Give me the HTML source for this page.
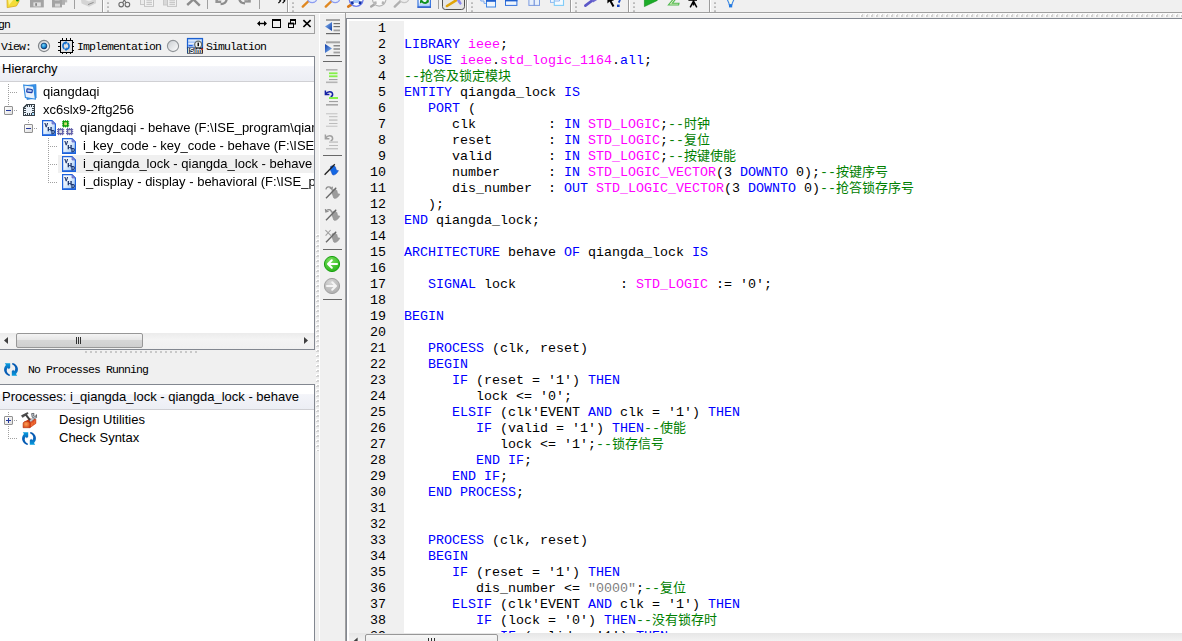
<!DOCTYPE html>
<html><head><meta charset="utf-8"><title>ISE</title>
<style>
html,body{margin:0;padding:0;}
body{width:1182px;height:641px;overflow:hidden;background:#f0f0f0;position:relative;font-family:"Liberation Sans","Noto Sans CJK SC",sans-serif;font-size:13px;color:#000;}
.abs,.a{position:absolute;}
svg{position:absolute;overflow:visible;}
svg.gl{will-change:transform;}
/* top toolbar */
#tbline{position:absolute;left:0;top:12px;width:1182px;height:1px;background:#a0a0a0;box-shadow:0 1px 0 #fafafa;}
.vsep{position:absolute;top:0;width:1px;height:9px;background:#a0a0a0;}
.vend{position:absolute;top:0;width:1px;height:12px;background:#9c9c9c;box-shadow:1px 0 0 #fff;}
.grip{position:absolute;top:2px;width:2px;height:10px;background:repeating-linear-gradient(to bottom,#d0d0d0 0,#b4b4b4 2px,transparent 2px,transparent 4px);}
/* left panel */
#ptitle{position:absolute;left:-1px;top:15px;width:314px;height:17px;border:1px solid #a0a0a0;box-sizing:content-box;}
.sim{font-family:"Liberation Mono","Noto Sans CJK SC",monospace;font-size:11.5px;letter-spacing:-0.9px;white-space:pre;}
#hbox{position:absolute;left:-1px;top:56px;width:314px;height:292px;border:1px solid #828790;background:#fff;box-sizing:content-box;overflow:hidden;}
#pbox{position:absolute;left:-1px;top:384px;width:314px;height:270px;border:1px solid #828790;background:#fff;box-sizing:content-box;overflow:hidden;}
.hdr{position:absolute;left:0;top:0;width:315px;height:24px;background:linear-gradient(#ffffff 0,#ffffff 36%,#f3f4f9 40%,#eceef4 100%);border-bottom:1px solid #d0d0d4;}
.hdr span{position:absolute;left:2px;top:4px;white-space:pre;}
.ti{position:absolute;white-space:pre;line-height:18px;height:18px;}
.dotv{position:absolute;width:1px;background:repeating-linear-gradient(to bottom,#a0a0a0 0,#a0a0a0 1px,transparent 1px,transparent 2px);}
.doth{position:absolute;height:1px;background:repeating-linear-gradient(to right,#a0a0a0 0,#a0a0a0 1px,transparent 1px,transparent 2px);}
.pm{position:absolute;width:7px;height:7px;border:1px solid #919191;background:linear-gradient(135deg,#fff,#e0e0e0);border-radius:1px;}
.pm:before{content:"";position:absolute;left:1px;top:3px;width:5px;height:1px;background:#24399b;}
.pm.plus:after{content:"";position:absolute;left:3px;top:1px;width:1px;height:5px;background:#24399b;}
/* editor */
#edtb{position:absolute;left:319px;top:13px;width:1px;height:628px;background:#fff;}
#edtb2{position:absolute;left:319px;top:13px;width:26px;height:1px;background:#fff;}
#vdots{position:absolute;left:316px;top:234px;width:3px;height:217px;background:repeating-linear-gradient(to bottom,#fff 0,#fff 1px,#cdcdcd 1px,#d4d4d4 3px,transparent 3px,transparent 5px);}
#vdots:after{content:"";position:absolute;left:0;top:0;width:1px;height:100%;background:repeating-linear-gradient(to bottom,#fff 0,#fff 2px,transparent 2px,transparent 5px);}
#hdots{position:absolute;left:860px;top:14px;width:322px;height:3px;background:repeating-linear-gradient(to right,#fff 0,#fff 1px,#cdcdcd 1px,#d4d4d4 3px,transparent 3px,transparent 5px);}
#hdots:after{content:"";position:absolute;left:0;top:0;height:1px;width:100%;background:repeating-linear-gradient(to right,#fff 0,#fff 2px,transparent 2px,transparent 5px);}
#vline{position:absolute;left:345px;top:13px;width:1px;height:628px;background:#a0a0a0;}
#edframe{position:absolute;left:346px;top:18px;width:836px;height:623px;background:#fff;border-left:1px solid #828790;border-top:1px solid #828790;box-sizing:border-box;}
#gutter{position:absolute;left:349px;top:21px;width:55px;height:612px;background:#f0f0f0;}
#code{position:absolute;left:349px;top:21px;width:833px;height:612px;overflow:hidden;font-family:"Liberation Mono","Noto Sans CJK SC",monospace;font-size:13.33px;line-height:16px;color:#000;}
#code .ln{height:16px;position:relative;}
#code .no{position:absolute;left:0;width:37px;text-align:right;top:0;}
#code .tx{position:absolute;left:55px;top:0;white-space:pre;}
.k{color:#0000ff}.t{color:#ff00ff}.c{color:#008000}.s{color:#808080}
.z{font-size:13px}
#hsb{position:absolute;left:349px;top:633px;width:833px;height:8px;background:linear-gradient(#e6e6e6,#f2f2f2);}
#hthumb{position:absolute;left:365px;top:634px;width:131px;height:12px;border:1px solid #979797;border-radius:2px;background:linear-gradient(#f6f6f6,#e8e8e8);}
</style></head><body>

<!-- ===== top toolbar (clipped) ===== -->
<div id="tbline"></div>
<div class="vsep" style="left:74px"></div><div class="vsep" style="left:207px"></div><div class="vsep" style="left:259px"></div><div class="vsep" style="left:438px"></div><div class="vend" style="left:102px"></div><div class="grip" style="left:107px"></div><div class="vend" style="left:287px"></div><div class="grip" style="left:292px"></div><div class="vend" style="left:466px"></div><div class="grip" style="left:471px"></div><div class="vend" style="left:570px"></div><div class="grip" style="left:575px"></div><div class="vend" style="left:628px"></div><div class="grip" style="left:633px"></div><div class="vend" style="left:709px"></div><div class="grip" style="left:714px"></div><svg style="left:0;top:0" width="760" height="12" viewBox="0 0 760 12"><g><path d="M7 -2 L19.2 -2 L19 1.4 L16.4 6 L7.2 7.6 Z" fill="#f4dc38" stroke="#d8a818" stroke-width="0.8"/><path d="M8 -1 L14 -1 L9 5 Z" fill="#fcf490"/><circle cx="17.4" cy="0.2" r="1.3" fill="#189818"/><rect x="30" y="-3" width="13.8" height="10.4" fill="#a4a4a4"/><rect x="33.4" y="2.4" width="7.4" height="4" fill="#e0e0e0"/><rect x="35.4" y="3.2" width="1.4" height="2.6" fill="#707070"/><rect x="52" y="-3" width="10" height="10.4" fill="#a4a4a4"/><rect x="55" y="3.6" width="5" height="3" fill="#d8d8d8"/><rect x="54.6" y="-3" width="5" height="3.6" fill="#d0d0d0"/><rect x="62" y="-3" width="3" height="7.8" fill="#b0b0b0"/><rect x="65" y="-3" width="2.2" height="5.4" fill="#bcbcbc"/><path d="M81 0 L81.6 3.4 L89 6.8 L96 3.2 L96 -1 Z" fill="#d4d4d4"/><path d="M83 -1 L89 1.6 L95 -1 Z" fill="#ececec"/><path d="M88 4.6 L93.6 2.4" stroke="#909090" stroke-width="1"/><circle cx="121.2" cy="4.6" r="2.3" fill="none" stroke="#6c6c6c" stroke-width="1.1"/><circle cx="127.4" cy="4.6" r="2.3" fill="none" stroke="#6c6c6c" stroke-width="1.1"/><path d="M122.6 2.8 L125.4 -2 M126 2.8 L123.2 -2" stroke="#6c6c6c" stroke-width="1.1"/><rect x="140.5" y="-3" width="5" height="7.5" fill="#ececec" stroke="#c8c8c8" stroke-width="1"/><rect x="144.5" y="-3" width="9" height="9.4" fill="#f4f4f4" stroke="#c4c4c4" stroke-width="1"/><path d="M146.4 0.8 H152 M146.4 2.6 H152 M146.4 4.4 H152" stroke="#c0c0c0" stroke-width="0.9"/><rect x="163.5" y="-3" width="5" height="8" fill="#d8d8d8" stroke="#c8c8c8" stroke-width="1"/><rect x="167.5" y="-3" width="9" height="9.4" fill="#f0f0f0" stroke="#c4c4c4" stroke-width="1"/><path d="M169.4 0.8 H175 M169.4 2.6 H175 M169.4 4.4 H175" stroke="#c0c0c0" stroke-width="0.9"/><path d="M187.2 5 L193.4 -0.6 L199.8 5.6" stroke="#8c8c8c" stroke-width="2.4" fill="none" stroke-linejoin="miter"/><rect x="215.4" y="-2" width="5.8" height="5" fill="#949494"/><rect x="218" y="-2" width="3.2" height="2.6" fill="#f0f0f0"/><path d="M220.6 4.2 C224.6 4 226.8 2 226.8 -2" stroke="#8c8c8c" stroke-width="2.2" fill="none"/><rect x="244.4" y="-2" width="6.4" height="4.6" fill="#949494"/><rect x="244.4" y="-2" width="3.6" height="2.2" fill="#f0f0f0"/><path d="M245 3.4 C241 3.2 239.2 1.4 239.2 -2" stroke="#8c8c8c" stroke-width="2.2" fill="none"/><path d="M277.6 -2 L280.6 0.8 L278.4 3.2 M281.8 -2 L284.8 0.8 L282.6 3.2" stroke="#000" stroke-width="1.2" fill="none"/><path d="M302.8 6.6 L308.6 1" stroke="#e08820" stroke-width="2.4" stroke-linecap="round"/><circle cx="312.2" cy="-2" r="4.7" fill="#e4ecfc" stroke="#8c9cf0" stroke-width="1.2"/><path d="M325.8 6.6 L331.6 1" stroke="#e08820" stroke-width="2.4" stroke-linecap="round"/><circle cx="335.2" cy="-2" r="4.7" fill="#e4ecfc" stroke="#8c9cf0" stroke-width="1.2"/><path d="M348.2 6.6 L351.4 4.6" stroke="#d87818" stroke-width="2.6" stroke-linecap="round"/><circle cx="356.2" cy="-0.6" r="6.9" fill="#fbfcff" stroke="#6c7cec" stroke-width="1.3"/><ellipse cx="356.2" cy="0.4" rx="3.2" ry="2.6" fill="#a4c4f8"/><path d="M350.4 1.6 L353.4 1.2 L353.8 4 L351.6 4.6 Z" fill="#1030a4"/><path d="M362 1.6 L359 1.2 L358.6 4 L360.8 4.6 Z" fill="#1030a4"/><path d="M353.4 -3 L355 -1.6 M359 -3 L357.4 -1.6" stroke="#2848c0" stroke-width="1.2"/><path d="M371.2 6.6 L374.4 4.6" stroke="#a8a8a8" stroke-width="2.4" stroke-linecap="round"/><circle cx="379.2" cy="-0.6" r="6.7" fill="#f8f8f8" stroke="#b4b4b4" stroke-width="1.2"/><path d="M373.6 1.8 L376.4 1.2 L376.8 3.8 L374.8 4.6 Z" fill="#b4b4b4"/><path d="M384.8 1.8 L382 1.2 L381.6 3.8 L383.6 4.6 Z" fill="#b4b4b4"/><path d="M375.4 -3 Q379.2 1.6 383 -3" stroke="#c0c0c0" stroke-width="1.1" fill="none"/><path d="M394.8 6.6 L400.6 1" stroke="#b0b0b0" stroke-width="2.4" stroke-linecap="round"/><circle cx="404.2" cy="-2" r="4.7" fill="#ececec" stroke="#c4c4c4" stroke-width="1.2"/><defs><linearGradient id="rd" x1="0" y1="0" x2="0" y2="1"><stop offset="0" stop-color="#ffffff"/><stop offset="0.5" stop-color="#f0f6fe"/><stop offset="1" stop-color="#98c0f8"/></linearGradient></defs><rect x="418" y="-4" width="12.4" height="11" fill="url(#rd)" stroke="#3c78e0" stroke-width="1.2"/><rect x="417.4" y="6.6" width="13.6" height="1.2" fill="#2858c8"/><path d="M421 -2 C420.6 2.6 425.4 4.4 428 1.4" stroke="#109020" stroke-width="2" fill="none"/><path d="M420 3.6 L420 0.4 L423.2 1.6 Z M428.8 -1 L428.8 2.6 L425.6 1.2 Z" fill="#109020"/><rect x="442.5" y="-5" width="22" height="14.5" rx="2.8" fill="#e6e6e6" stroke="#505050" stroke-width="1"/><path d="M447 6 L456.4 0.2" stroke="#e0a408" stroke-width="2.6" stroke-linecap="round"/><path d="M456.4 -1.4 L458.8 -2 L461.8 3.6 L460.2 5 L457.8 2 Z" fill="#8c88f0"/><path d="M480.8 -3 V1 H484 V3.4 H486" stroke="#78a8f0" stroke-width="1" fill="none"/><rect x="486.5" y="-3" width="9" height="10" fill="#eef5fd" stroke="#3c84e4" stroke-width="1"/><rect x="486" y="-1" width="10" height="2.8" fill="#2060d0"/><rect x="505.5" y="-4" width="11.4" height="9.4" fill="#eef5fd" stroke="#3070dc" stroke-width="1"/><rect x="505" y="-2" width="12.4" height="3.4" fill="#2060d0"/><rect x="528.9" y="-4" width="10.6" height="9.4" fill="#e8f0fa" stroke="#7c9ce0" stroke-width="1"/><path d="M534.2 -4 V5.4" stroke="#6c8cd8" stroke-width="1.1"/><rect x="550.5" y="-6" width="9" height="8.4" fill="#f0f6fe" stroke="#90b8f0" stroke-width="1"/><rect x="554.3" y="-3" width="9.2" height="8.4" fill="#f4faff" stroke="#80ccf8" stroke-width="1.1"/><path d="M554.3 1 H559.5 V-3" stroke="#90b8f0" stroke-width="1" fill="none"/><path d="M585.4 5.6 L592 0.6" stroke="#5c58c8" stroke-width="2.6" stroke-linecap="round"/><path d="M590.6 -1 L597.6 -3 L598 -0.6 L593 2.6 Z" fill="#6c68d0"/><path d="M607.4 -5 L607.4 3.6 L609.6 1.6 L612.6 7 L614.4 6 L611.6 1 L614 0.6 Z" fill="#000"/><path d="M617.4 -3 C620.4 -3 620.6 0 618.6 2.6" stroke="#1040c0" stroke-width="1.8" fill="none"/><rect x="617" y="4.6" width="2.6" height="2.4" fill="#1040c0"/><path d="M644.4 -6 L657.4 0.4 L644.4 6.6 Z" fill="#1cac28" stroke="#0c8c18" stroke-width="0.6"/><path d="M675 -3 L668.4 5 H678.6 L679 3.2 H672.4 L677.4 -3 Z" fill="#e4f4c8" stroke="#50b850" stroke-width="1.1"/><path d="M693.5 -3 V5.4 M693.5 1 L690.2 7.4 M693.5 1 L696.8 7.4" stroke="#000" stroke-width="1.5" fill="none"/><rect x="688.4" y="-3" width="8.6" height="3.8" fill="#000"/><path d="M727 -3 C726.8 0.6 729 1.8 729.2 4.6 H732 C732.2 1.8 734.4 0.6 734.2 -3 Z" fill="#f4f8e8" stroke="#3c84e4" stroke-width="1.1"/><rect x="729" y="4.8" width="3.2" height="2.6" fill="#2078e0"/></g></svg>

<!-- ===== left panel ===== -->
<div id="ptitle"></div>
<span class="a sim" style="left:-8px;top:18px;">ign</span>
<svg style="left:0;top:0" width="320" height="40" viewBox="0 0 320 40"><path d="M258 23.5 H266" stroke="#000" stroke-width="1.4"/><path d="M257 23.5 L260 20.8 V26.2 Z M267 23.5 L264 20.8 V26.2 Z" fill="#000"/><rect x="272.5" y="20" width="8" height="7.5" fill="none" stroke="#000" stroke-width="1"/><rect x="272" y="19" width="9" height="2" fill="#000"/><rect x="290.5" y="20" width="5" height="4" fill="none" stroke="#000" stroke-width="1"/><rect x="290" y="19" width="6" height="2" fill="#000"/><rect x="288.5" y="23.5" width="5" height="4" fill="#f0f0f0" stroke="#000" stroke-width="1"/><rect x="288" y="22.6" width="6" height="1.8" fill="#000"/><path d="M303.4 20.2 L310.6 27 M310.6 20.2 L303.4 27" stroke="#000" stroke-width="1.7"/></svg>
<span class="a sim" style="left:1px;top:40px;">View:</span>
<span class="a sim" style="left:77px;top:40px;">Implementation</span>
<span class="a sim" style="left:206px;top:40px;">Simulation</span>
<svg style="left:0;top:0" width="320" height="60" viewBox="0 0 320 60"><defs><radialGradient id="rb" cx="0.4" cy="0.35" r="0.7"><stop offset="0" stop-color="#7cd4f8"/><stop offset="0.6" stop-color="#1888d0"/><stop offset="1" stop-color="#0c3068"/></radialGradient><linearGradient id="rr" x1="0" y1="0" x2="1" y2="1"><stop offset="0" stop-color="#c8ccd0"/><stop offset="1" stop-color="#ffffff"/></linearGradient></defs><circle cx="44" cy="46" r="5.6" fill="url(#rr)" stroke="#808488" stroke-width="1.1"/><circle cx="44" cy="46" r="2.9" fill="url(#rb)" stroke="#0c3068" stroke-width="0.7"/><circle cx="173" cy="46" r="5.6" fill="url(#rr)" stroke="#909498" stroke-width="1.1"/><rect x="62" y="38" width="1" height="16" fill="#000"/><rect x="58" y="42" width="16" height="1" fill="#000"/><rect x="66" y="38" width="1" height="16" fill="#000"/><rect x="58" y="46" width="16" height="1" fill="#000"/><rect x="70" y="38" width="1" height="16" fill="#000"/><rect x="58" y="50" width="16" height="1" fill="#000"/><rect x="60.5" y="40.5" width="12" height="12" fill="#e0e0e0" stroke="#000" stroke-width="1"/><g fill="#1470cc"><path d="M65.6 41.8 C62.8 42.2 61.9 44.4 62.2 46.4 C62.4 47.8 63.1 48.8 64.1 49.4 L64.9 48.1 C64.1 47.5 63.8 46.9 63.8 46 C63.8 44.7 64.3 43.9 65.3 43.5 L65.3 44.8 L67.5 42.6 L65.6 40.7 Z"/><path d="M66.4 50.2 C69.2 49.8 70.1 47.6 69.8 45.6 C69.6 44.2 68.9 43.2 67.9 42.6 L67.1 43.9 C67.9 44.5 68.2 45.1 68.2 46 C68.2 47.3 67.7 48.1 66.7 48.5 L66.7 47.2 L64.5 49.4 L66.4 51.3 Z"/></g><rect x="187.5" y="38.5" width="15" height="10" fill="#a8c8f8" stroke="#1c60d0" stroke-width="1.2"/><rect x="188.4" y="40" width="13" height="1.4" fill="#d8e8fc"/><rect x="188.4" y="43" width="6" height="1.2" fill="#e8f0fc"/><rect x="188.6" y="45" width="4" height="1.2" fill="#2060e0"/><circle cx="198.2" cy="44.6" r="3.5" fill="#f0f4f4" stroke="#68706c" stroke-width="1.3"/><rect x="197.5" y="42.6" width="1.5" height="3.6" fill="#101010"/><rect x="187" y="47.6" width="16" height="6" fill="#141c2c"/><path d="M196 47.6 L198.2 49.6 L200.4 47.6 Z" fill="#68706c"/><text x="187.6" y="53" font-family="Liberation Sans,sans-serif" font-weight="bold" font-size="6.3" fill="#fff" textLength="14.6" lengthAdjust="spacingAndGlyphs">ISim</text><rect x="201.4" y="48.4" width="1.4" height="1.6" fill="#e83828"/></svg>

<div id="hbox">
  <div class="hdr"><span>Hierarchy</span></div>
  <div class="a" style="left:58px;top:98px;width:257px;height:18px;background:#f0f0f0"></div>
<div class="dotv" style="left:8px;top:27px;height:22px"></div>
<div class="doth" style="left:10px;top:35px;width:8px"></div>
<div class="doth" style="left:14px;top:53px;width:4px"></div>
<div class="dotv" style="left:28px;top:63px;height:4px"></div>
<div class="doth" style="left:34px;top:71px;width:4px"></div>
<div class="dotv" style="left:48px;top:81px;height:45px"></div>
<div class="doth" style="left:50px;top:89px;width:8px"></div>
<div class="doth" style="left:50px;top:107px;width:8px"></div>
<div class="doth" style="left:50px;top:125px;width:8px"></div>
<div class="pm" style="left:4px;top:49px"></div>
<div class="pm" style="left:24px;top:67px"></div>
<svg style="left:23px;top:27px" width="14" height="16" viewBox="0 0 14 16" ><path d="M2 1.6 L13 0.4 L13.2 14 L4 15.6 Z" fill="#3c94e8" stroke="#1c78d8" stroke-width="0.6"/><path d="M0.7 1 L10.6 2.2 L12.4 15.2 L2.4 13.6 Z" fill="#e8f2fc" stroke="#2a86e0" stroke-width="1.1"/><rect x="3.8" y="5.2" width="5.4" height="3.2" rx="0.6" fill="#b8d0f4" stroke="#1c3ca8" stroke-width="1.2" transform="rotate(8 6.5 7)"/></svg>
<svg style="left:23px;top:47px" width="12" height="12" viewBox="0 0 12 12" ><rect x="0" y="0" width="12" height="12" fill="#364048"/><rect x="3" y="1" width="1" height="2" fill="#eaf2fa"/><rect x="1" y="3" width="2" height="1" fill="#eaf2fa"/><rect x="5" y="1" width="1" height="2" fill="#eaf2fa"/><rect x="1" y="5" width="2" height="1" fill="#eaf2fa"/><rect x="7" y="1" width="1" height="2" fill="#eaf2fa"/><rect x="1" y="7" width="2" height="1" fill="#eaf2fa"/><rect x="9" y="1" width="1" height="2" fill="#eaf2fa"/><rect x="1" y="9" width="2" height="1" fill="#eaf2fa"/><rect x="1" y="9" width="1" height="2" fill="#eaf2fa"/><rect x="9" y="1" width="2" height="1" fill="#eaf2fa"/><rect x="3" y="9" width="1" height="2" fill="#eaf2fa"/><rect x="9" y="3" width="2" height="1" fill="#eaf2fa"/><rect x="5" y="9" width="1" height="2" fill="#eaf2fa"/><rect x="9" y="5" width="2" height="1" fill="#eaf2fa"/><rect x="7" y="9" width="1" height="2" fill="#eaf2fa"/><rect x="9" y="7" width="2" height="1" fill="#eaf2fa"/><rect x="9" y="9" width="1" height="2" fill="#eaf2fa"/><rect x="9" y="9" width="2" height="1" fill="#eaf2fa"/><rect x="3" y="3" width="6" height="6" fill="#eaf2fa"/><path d="M0 0 L4 0 L0 4 Z" fill="#fff"/><path d="M0.2 4.3 L4.3 0.2" stroke="#364048" stroke-width="1.3"/><rect x="9" y="9" width="2" height="2" fill="#a8dcfc"/></svg>
<svg style="left:42px;top:63px" width="14" height="16" viewBox="0 0 14 16" class="gl"><defs><linearGradient id="vga" x1="0" y1="0" x2="1" y2="1"><stop offset="0" stop-color="#ffffff"/><stop offset="0.45" stop-color="#e4f0fc"/><stop offset="1" stop-color="#8cbcf4"/></linearGradient></defs><path d="M0.6 0.6 H10 L13.4 4 V15.4 H0.6 Z" fill="url(#vga)" stroke="#1c62dc" stroke-width="1.2"/><path d="M1.2 14.6 H13" stroke="#1c62dc" stroke-width="0.8" fill="none"/><path d="M10 0.7 V4 H13.3 Z" fill="#8890dc" stroke="#5a66c8" stroke-width="0.7"/><g font-family="Liberation Sans,sans-serif" font-weight="bold" fill="#08205c" stroke="#08205c" stroke-width="0.25"><text x="2.4" y="6.8" font-size="5.2">V</text><text x="5.4" y="11.4" font-size="6.2">H</text><text x="9.3" y="14" font-size="5">D</text></g></svg>
<svg style="left:57px;top:63px" width="17" height="16" viewBox="0 0 17 16" ><rect x="6.1" y="0.2" width="1" height="7.2" fill="#0c9c0c"/><rect x="5" y="1.3" width="7.2" height="1" fill="#0c9c0c"/><rect x="8.1" y="0.2" width="1" height="7.2" fill="#0c9c0c"/><rect x="5" y="3.3" width="7.2" height="1" fill="#0c9c0c"/><rect x="10.1" y="0.2" width="1" height="7.2" fill="#0c9c0c"/><rect x="5" y="5.3" width="7.2" height="1" fill="#0c9c0c"/><rect x="5.9" y="1.1" width="5.4" height="5.4" fill="#0c9c0c"/><rect x="7.2" y="2.4" width="2.8" height="2.8" fill="#d4e070"/><rect x="1.1" y="8" width="1" height="7.2" fill="#6462a8"/><rect x="0" y="9.1" width="7.2" height="1" fill="#6462a8"/><rect x="3.1" y="8" width="1" height="7.2" fill="#6462a8"/><rect x="0" y="11.1" width="7.2" height="1" fill="#6462a8"/><rect x="5.1" y="8" width="1" height="7.2" fill="#6462a8"/><rect x="0" y="13.1" width="7.2" height="1" fill="#6462a8"/><rect x="0.9" y="8.9" width="5.4" height="5.4" fill="#6462a8"/><rect x="2.2" y="10.2" width="2.8" height="2.8" fill="#dcdce0"/><rect x="10.1" y="8" width="1" height="7.2" fill="#6462a8"/><rect x="9" y="9.1" width="7.2" height="1" fill="#6462a8"/><rect x="12.1" y="8" width="1" height="7.2" fill="#6462a8"/><rect x="9" y="11.1" width="7.2" height="1" fill="#6462a8"/><rect x="14.1" y="8" width="1" height="7.2" fill="#6462a8"/><rect x="9" y="13.1" width="7.2" height="1" fill="#6462a8"/><rect x="9.9" y="8.9" width="5.4" height="5.4" fill="#6462a8"/><rect x="11.2" y="10.2" width="2.8" height="2.8" fill="#dcdce0"/></svg>
<svg style="left:62px;top:81px" width="14" height="16" viewBox="0 0 14 16" class="gl"><defs><linearGradient id="vgb" x1="0" y1="0" x2="1" y2="1"><stop offset="0" stop-color="#ffffff"/><stop offset="0.45" stop-color="#e4f0fc"/><stop offset="1" stop-color="#8cbcf4"/></linearGradient></defs><path d="M0.6 0.6 H10 L13.4 4 V15.4 H0.6 Z" fill="url(#vgb)" stroke="#1c62dc" stroke-width="1.2"/><path d="M1.2 14.6 H13" stroke="#1c62dc" stroke-width="0.8" fill="none"/><path d="M10 0.7 V4 H13.3 Z" fill="#8890dc" stroke="#5a66c8" stroke-width="0.7"/><g font-family="Liberation Sans,sans-serif" font-weight="bold" fill="#08205c" stroke="#08205c" stroke-width="0.25"><text x="2.4" y="6.8" font-size="5.2">V</text><text x="5.4" y="11.4" font-size="6.2">H</text><text x="9.3" y="14" font-size="5">D</text></g></svg>
<svg style="left:62px;top:99px" width="14" height="16" viewBox="0 0 14 16" class="gl"><defs><linearGradient id="vgc" x1="0" y1="0" x2="1" y2="1"><stop offset="0" stop-color="#ffffff"/><stop offset="0.45" stop-color="#e4f0fc"/><stop offset="1" stop-color="#8cbcf4"/></linearGradient></defs><path d="M0.6 0.6 H10 L13.4 4 V15.4 H0.6 Z" fill="url(#vgc)" stroke="#1c62dc" stroke-width="1.2"/><path d="M1.2 14.6 H13" stroke="#1c62dc" stroke-width="0.8" fill="none"/><path d="M10 0.7 V4 H13.3 Z" fill="#8890dc" stroke="#5a66c8" stroke-width="0.7"/><g font-family="Liberation Sans,sans-serif" font-weight="bold" fill="#08205c" stroke="#08205c" stroke-width="0.25"><text x="2.4" y="6.8" font-size="5.2">V</text><text x="5.4" y="11.4" font-size="6.2">H</text><text x="9.3" y="14" font-size="5">D</text></g></svg>
<svg style="left:62px;top:117px" width="14" height="16" viewBox="0 0 14 16" class="gl"><defs><linearGradient id="vgd" x1="0" y1="0" x2="1" y2="1"><stop offset="0" stop-color="#ffffff"/><stop offset="0.45" stop-color="#e4f0fc"/><stop offset="1" stop-color="#8cbcf4"/></linearGradient></defs><path d="M0.6 0.6 H10 L13.4 4 V15.4 H0.6 Z" fill="url(#vgd)" stroke="#1c62dc" stroke-width="1.2"/><path d="M1.2 14.6 H13" stroke="#1c62dc" stroke-width="0.8" fill="none"/><path d="M10 0.7 V4 H13.3 Z" fill="#8890dc" stroke="#5a66c8" stroke-width="0.7"/><g font-family="Liberation Sans,sans-serif" font-weight="bold" fill="#08205c" stroke="#08205c" stroke-width="0.25"><text x="2.4" y="6.8" font-size="5.2">V</text><text x="5.4" y="11.4" font-size="6.2">H</text><text x="9.3" y="14" font-size="5">D</text></g></svg>
<span class="ti" style="left:43px;top:26px">qiangdaqi</span>
<span class="ti" style="left:43px;top:44px">xc6slx9-2ftg256</span>
<span class="ti" style="left:80px;top:62px">qiangdaqi - behave (F:\ISE_program\qiangdaqi\qiangdaqi.vhd)</span>
<span class="ti" style="left:83px;top:80px">i_key_code - key_code - behave (F:\ISE_program\qiangdaqi\key_code.vhd)</span>
<span class="ti" style="left:83px;top:98px">i_qiangda_lock - qiangda_lock - behave (F:\ISE_program\qiangdaqi\qiangda_lock.vhd)</span>
<span class="ti" style="left:83px;top:116px">i_display - display - behavioral (F:\ISE_program\qiangdaqi\display.vhd)</span>
<div class="a" style="left:0;top:276px;width:315px;height:16px;background:linear-gradient(#ebebeb,#f4f4f4 40%,#f0f0f0)"></div>
<div class="a" style="left:16px;top:276px;width:125px;height:13px;border:1px solid #979797;border-radius:2px;background:linear-gradient(#f4f4f4,#e6e6e6 45%,#d6d6d6 50%,#cfcfcf)"></div>
<svg style="left:0;top:276px" width="315" height="16"><path d="M8 4 L4 7.5 L8 11 Z" fill="#404040"/><path d="M304 4 L308 7.5 L304 11 Z" fill="#404040"/><path d="M76.5 4 V11 M78.5 4 V11 M80.5 4 V11" stroke="#303030" stroke-width="1"/></svg>
</div>

<div class="a" style="left:85px;top:351px;width:112px;height:2px;background:repeating-linear-gradient(to right,#c8c8c8 0,#c8c8c8 2px,transparent 2px,transparent 5px)"></div>
<svg style="left:4px;top:363px" width="14" height="13" viewBox="0 0 14 13" ><defs><linearGradient id="rfm" x1="0" y1="0" x2="0" y2="1"><stop offset="0" stop-color="#08a0e0"/><stop offset="0.5" stop-color="#0860b8"/><stop offset="1" stop-color="#0458b0"/></linearGradient></defs><path d="M0.8 0.2 L6.2 0.2 L6.2 4.8 L4.8 6.2 L3.8 4.8 C2.4 6.4 2.4 8.2 3.6 10 C4.2 10.8 5.2 11.4 6 11.8 L5.6 12.9 C3 12.6 0.5 10.2 0.1 7.2 C-0.1 5 0.7 3.4 2 2 Z" fill="url(#rfm)"/><path d="M0.8 0.2 L6.2 0.2 L6.2 4.8 L4.8 6.2 L3.8 4.8 C2.4 6.4 2.4 8.2 3.6 10 C4.2 10.8 5.2 11.4 6 11.8 L5.6 12.9 C3 12.6 0.5 10.2 0.1 7.2 C-0.1 5 0.7 3.4 2 2 Z" fill="url(#rfm)" transform="rotate(180 7 6.5)"/></svg>
<span class="a sim" style="left:28px;top:363px;">No Processes Running</span>

<div id="pbox">
  <div class="hdr"><span>Processes: i_qiangda_lock - qiangda_lock - behave</span></div>
  <div class="dotv" style="left:8px;top:27px;height:28px"></div>
<div class="doth" style="left:14px;top:35px;width:4px"></div>
<div class="doth" style="left:8px;top:53px;width:10px"></div>
<div class="pm plus" style="left:4px;top:31px"></div>
<svg style="left:21px;top:26px" width="17" height="17" viewBox="0 0 17 17" ><defs><radialGradient id="tbx" cx="0.45" cy="0.45" r="0.7"><stop offset="0" stop-color="#fca058"/><stop offset="1" stop-color="#d43c0c"/></radialGradient></defs><path d="M8.9 12.2 L14.9 8.2 L14.9 12.4 L8.9 16.7 Z" fill="#e85420" stroke="#b83010" stroke-width="0.5"/><path d="M10 13.4 L14 10.6 M10 15 L14 12" stroke="#f8a060" stroke-width="0.7" stroke-dasharray="0.9 0.9"/><path d="M2.6 11.4 L8.6 7.6 L14.9 8.2 L8.9 12.2 Z" fill="#c83410"/><path d="M2.1 16.7 V12.6 C2.1 9.6 8.9 9.4 8.9 12.6 V16.7 Z" fill="url(#tbx)" stroke="#b02808" stroke-width="0.6"/><path d="M4.4 3.2 L9.4 9.6" stroke="#404040" stroke-width="2"/><path d="M0.4 4.6 L6.4 1.6 L7.2 2 L6.6 3 L1.6 6.4 Z" fill="#505050" stroke="#303030" stroke-width="0.5"/><path d="M9.2 10.2 L13.6 6.2" stroke="#b8c4cc" stroke-width="2"/><path d="M10.6 2.6 L13 2.4 L12.6 5 L14.6 5.4 L15.4 3.6 L15.6 6.6 L13.8 7.4 L11.2 6.2 Z" fill="#c8d0d8" stroke="#404448" stroke-width="0.7"/></svg>
<svg style="left:22px;top:47px" width="14" height="13" viewBox="0 0 14 13" ><defs><linearGradient id="rfp" x1="0" y1="0" x2="0" y2="1"><stop offset="0" stop-color="#08a0e0"/><stop offset="0.5" stop-color="#0860b8"/><stop offset="1" stop-color="#0458b0"/></linearGradient></defs><path d="M0.8 0.2 L6.2 0.2 L6.2 4.8 L4.8 6.2 L3.8 4.8 C2.4 6.4 2.4 8.2 3.6 10 C4.2 10.8 5.2 11.4 6 11.8 L5.6 12.9 C3 12.6 0.5 10.2 0.1 7.2 C-0.1 5 0.7 3.4 2 2 Z" fill="url(#rfp)"/><path d="M0.8 0.2 L6.2 0.2 L6.2 4.8 L4.8 6.2 L3.8 4.8 C2.4 6.4 2.4 8.2 3.6 10 C4.2 10.8 5.2 11.4 6 11.8 L5.6 12.9 C3 12.6 0.5 10.2 0.1 7.2 C-0.1 5 0.7 3.4 2 2 Z" fill="url(#rfp)" transform="rotate(180 7 6.5)"/></svg>
<span class="ti" style="left:59px;top:26px">Design Utilities</span>
<span class="ti" style="left:59px;top:44px">Check Syntax</span>
</div>

<!-- ===== editor ===== -->
<div id="edtb"></div><div id="edtb2"></div><div id="vdots"></div><div id="hdots"></div>
<div id="vline"></div>
<svg style="left:0;top:0" width="346" height="310" viewBox="0 0 346 310"><defs><linearGradient id="tb1" x1="0" y1="0" x2="1" y2="1"><stop offset="0" stop-color="#8cbcf4"/><stop offset="1" stop-color="#0c3ca8"/></linearGradient><linearGradient id="tb2" x1="1" y1="1" x2="0" y2="0"><stop offset="0" stop-color="#8cbcf4"/><stop offset="1" stop-color="#0c3ca8"/></linearGradient><radialGradient id="gg" cx="0.4" cy="0.3" r="0.8"><stop offset="0" stop-color="#7be060"/><stop offset="1" stop-color="#1fb010"/></radialGradient><radialGradient id="gy" cx="0.4" cy="0.3" r="0.8"><stop offset="0" stop-color="#d8d8d8"/><stop offset="1" stop-color="#a8a8a8"/></radialGradient></defs><rect x="326" y="19" width="14" height="2" fill="#a4a4a4"/><rect x="333.5" y="23" width="6.5" height="1.2" fill="#707070"/><rect x="333.5" y="26" width="6.5" height="1.2" fill="#707070"/><rect x="333.5" y="29.5" width="6.5" height="1.8" fill="#a0a0a0"/><rect x="326" y="33" width="14" height="1.2" fill="#686868"/><path d="M325 26.5 L332 22 L332 31 Z" fill="url(#tb1)"/><rect x="326" y="41.3" width="14" height="2" fill="#a4a4a4"/><rect x="333.5" y="45.2" width="6.5" height="1.2" fill="#707070"/><rect x="333.5" y="48.4" width="6.5" height="1.2" fill="#707070"/><rect x="333.5" y="51.6" width="6.5" height="1.8" fill="#a0a0a0"/><rect x="326" y="55" width="14" height="1.2" fill="#686868"/><path d="M332 48.5 L325 44 L325 53 Z" fill="url(#tb2)"/><rect x="323" y="61" width="19" height="1" fill="#686868"/><rect x="326" y="69" width="11.5" height="1.6" fill="#b4b4b4"/><rect x="329" y="72.4" width="8.5" height="1.8" fill="#84f048"/><rect x="329" y="75.4" width="8.5" height="1.8" fill="#84f048"/><rect x="329" y="79" width="8.5" height="1.1" fill="#a0a0a0"/><rect x="326" y="81.5" width="11.5" height="1.6" fill="#b4b4b4"/><path d="M325.4 90.4 l0 4.2 l4 0 M325.8 93.8 c1.8 -3 6.4 -2.8 6.8 0.2 c0.2 1.6 -0.8 2.4 -2 2.8" stroke="#1420a4" stroke-width="1.5" fill="none"/><rect x="329" y="97" width="9" height="2" fill="#84f048"/><rect x="329" y="101" width="9" height="1.1" fill="#a0a0a0"/><rect x="326" y="104" width="12" height="1.6" fill="#a8a8a8"/><rect x="326" y="113" width="11.5" height="1.4" fill="#cfcfcf"/><rect x="329" y="116.2" width="8.5" height="1" fill="#bcbcbc"/><rect x="329" y="119.2" width="8.5" height="1.8" fill="#cccccc"/><rect x="329" y="123" width="8.5" height="1" fill="#bcbcbc"/><rect x="326" y="125.6" width="11.5" height="1.4" fill="#cfcfcf"/><path d="M325.4 134.6 l0 4.2 l4 0 M325.8 138 c1.8 -3 6.4 -2.8 6.8 0.2 c0.2 1.6 -0.8 2.4 -2 2.8" stroke="#a0a0a0" stroke-width="1.5" fill="none"/><rect x="329" y="141.2" width="9" height="1.8" fill="#cccccc"/><rect x="329" y="145" width="9" height="1" fill="#bcbcbc"/><rect x="326" y="148" width="12" height="1.4" fill="#c4c4c4"/><rect x="323" y="155" width="19" height="1" fill="#686868"/><g transform="translate(0 0)"><path d="M330.6 166.4 C332.6 165.4 334.6 165.6 335.4 167 C336.2 168.6 335.4 170.4 338.4 170.6 C337.6 172.6 335.6 175 333.4 175 C331.6 175 332.2 172.4 330.6 170.6 Z" fill="#1468e4" stroke="#0a3cb0" stroke-width="0.5"/><path d="M324.6 174.8 L334.8 164.2" stroke="#202020" stroke-width="1.3"/></g><g transform="translate(1.4 23.5)"><path d="M330.6 166.4 C332.6 165.4 334.6 165.6 335.4 167 C336.2 168.6 335.4 170.4 338.4 170.6 C337.6 172.6 335.6 175 333.4 175 C331.6 175 332.2 172.4 330.6 170.6 Z" fill="#9c9c9c" stroke="#888888" stroke-width="0.5"/><path d="M324.6 174.8 L334.8 164.2" stroke="#686868" stroke-width="1.3"/></g><path d="M326 189.5 C326 186.5 330.5 186 331.5 188.5 M329.6 187.6 L332 189.4 L332.4 186.6" stroke="#909090" stroke-width="1.2" fill="none"/><g transform="translate(1.4 45.5)"><path d="M330.6 166.4 C332.6 165.4 334.6 165.6 335.4 167 C336.2 168.6 335.4 170.4 338.4 170.6 C337.6 172.6 335.6 175 333.4 175 C331.6 175 332.2 172.4 330.6 170.6 Z" fill="#9c9c9c" stroke="#888888" stroke-width="0.5"/><path d="M324.6 174.8 L334.8 164.2" stroke="#686868" stroke-width="1.3"/></g><path d="M331.5 212.5 C331.5 209 327 208.8 326 211.4 M325.4 209 L325.8 212 L328.6 211.2" stroke="#909090" stroke-width="1.2" fill="none"/><g transform="translate(1.4 67.5)"><path d="M330.6 166.4 C332.6 165.4 334.6 165.6 335.4 167 C336.2 168.6 335.4 170.4 338.4 170.6 C337.6 172.6 335.6 175 333.4 175 C331.6 175 332.2 172.4 330.6 170.6 Z" fill="#9c9c9c" stroke="#888888" stroke-width="0.5"/><path d="M324.6 174.8 L334.8 164.2" stroke="#686868" stroke-width="1.3"/></g><path d="M325.4 230.2 L331 235.6 M330.6 230 L325.6 235.6" stroke="#a0a0a0" stroke-width="1.1" fill="none"/><rect x="323" y="249" width="19" height="1" fill="#686868"/><circle cx="332" cy="264" r="7.6" fill="url(#gg)" stroke="#18a010" stroke-width="1"/><path d="M337 264 H328.6 M331.8 260.2 L328 264 L331.8 267.8" stroke="#fff" stroke-width="2" fill="none" stroke-linecap="round" stroke-linejoin="round"/><circle cx="332" cy="286" r="7.6" fill="url(#gy)" stroke="#a0a0a0" stroke-width="1"/><path d="M327 286 H335.4 M332.2 282.2 L336 286 L332.2 289.8" stroke="#f4f4f4" stroke-width="2" fill="none" stroke-linecap="round" stroke-linejoin="round"/><rect x="323" y="299" width="19" height="1" fill="#686868"/></svg>
<div id="edframe"></div>
<div id="gutter"></div>
<div id="code">
<div class="ln"><span class="no">1</span><span class="tx"></span></div>
<div class="ln"><span class="no">2</span><span class="tx"><span class="k">LIBRARY</span> <span class="t">ieee</span>;</span></div>
<div class="ln"><span class="no">3</span><span class="tx">   <span class="k">USE</span> <span class="t">ieee</span>.<span class="t">std_logic_1164</span>.<span class="k">all</span>;</span></div>
<div class="ln"><span class="no">4</span><span class="tx"><span class="c">--<span class="z">抢答及锁定模块</span></span></span></div>
<div class="ln"><span class="no">5</span><span class="tx"><span class="k">ENTITY</span> qiangda_lock <span class="k">IS</span></span></div>
<div class="ln"><span class="no">6</span><span class="tx">   <span class="k">PORT</span> (</span></div>
<div class="ln"><span class="no">7</span><span class="tx">      clk         : <span class="k">IN</span> <span class="t">STD_LOGIC</span>;<span class="c">--<span class="z">时钟</span></span></span></div>
<div class="ln"><span class="no">8</span><span class="tx">      reset       : <span class="k">IN</span> <span class="t">STD_LOGIC</span>;<span class="c">--<span class="z">复位</span></span></span></div>
<div class="ln"><span class="no">9</span><span class="tx">      valid       : <span class="k">IN</span> <span class="t">STD_LOGIC</span>;<span class="c">--<span class="z">按键使能</span></span></span></div>
<div class="ln"><span class="no">10</span><span class="tx">      number      : <span class="k">IN</span> <span class="t">STD_LOGIC_VECTOR</span>(3 <span class="k">DOWNTO</span> 0);<span class="c">--<span class="z">按键序号</span></span></span></div>
<div class="ln"><span class="no">11</span><span class="tx">      dis_number  : <span class="k">OUT</span> <span class="t">STD_LOGIC_VECTOR</span>(3 <span class="k">DOWNTO</span> 0)<span class="c">--<span class="z">抢答锁存序号</span></span></span></div>
<div class="ln"><span class="no">12</span><span class="tx">   );</span></div>
<div class="ln"><span class="no">13</span><span class="tx"><span class="k">END</span> qiangda_lock;</span></div>
<div class="ln"><span class="no">14</span><span class="tx"></span></div>
<div class="ln"><span class="no">15</span><span class="tx"><span class="k">ARCHITECTURE</span> behave <span class="k">OF</span> qiangda_lock <span class="k">IS</span></span></div>
<div class="ln"><span class="no">16</span><span class="tx"></span></div>
<div class="ln"><span class="no">17</span><span class="tx">   <span class="k">SIGNAL</span> lock             : <span class="t">STD_LOGIC</span> := '0';</span></div>
<div class="ln"><span class="no">18</span><span class="tx"></span></div>
<div class="ln"><span class="no">19</span><span class="tx"><span class="k">BEGIN</span></span></div>
<div class="ln"><span class="no">20</span><span class="tx"></span></div>
<div class="ln"><span class="no">21</span><span class="tx">   <span class="k">PROCESS</span> (clk, reset)</span></div>
<div class="ln"><span class="no">22</span><span class="tx">   <span class="k">BEGIN</span></span></div>
<div class="ln"><span class="no">23</span><span class="tx">      <span class="k">IF</span> (reset = '1') <span class="k">THEN</span></span></div>
<div class="ln"><span class="no">24</span><span class="tx">         lock &lt;= '0';</span></div>
<div class="ln"><span class="no">25</span><span class="tx">      <span class="k">ELSIF</span> (clk'EVENT <span class="k">AND</span> clk = '1') <span class="k">THEN</span></span></div>
<div class="ln"><span class="no">26</span><span class="tx">         <span class="k">IF</span> (valid = '1') <span class="k">THEN</span><span class="c">--<span class="z">使能</span></span></span></div>
<div class="ln"><span class="no">27</span><span class="tx">            lock &lt;= '1';<span class="c">--<span class="z">锁存信号</span></span></span></div>
<div class="ln"><span class="no">28</span><span class="tx">         <span class="k">END</span> <span class="k">IF</span>;</span></div>
<div class="ln"><span class="no">29</span><span class="tx">      <span class="k">END</span> <span class="k">IF</span>;</span></div>
<div class="ln"><span class="no">30</span><span class="tx">   <span class="k">END</span> <span class="k">PROCESS</span>;</span></div>
<div class="ln"><span class="no">31</span><span class="tx"></span></div>
<div class="ln"><span class="no">32</span><span class="tx"></span></div>
<div class="ln"><span class="no">33</span><span class="tx">   <span class="k">PROCESS</span> (clk, reset)</span></div>
<div class="ln"><span class="no">34</span><span class="tx">   <span class="k">BEGIN</span></span></div>
<div class="ln"><span class="no">35</span><span class="tx">      <span class="k">IF</span> (reset = '1') <span class="k">THEN</span></span></div>
<div class="ln"><span class="no">36</span><span class="tx">         dis_number &lt;= <span class="s">"0000"</span>;<span class="c">--<span class="z">复位</span></span></span></div>
<div class="ln"><span class="no">37</span><span class="tx">      <span class="k">ELSIF</span> (clk'EVENT <span class="k">AND</span> clk = '1') <span class="k">THEN</span></span></div>
<div class="ln"><span class="no">38</span><span class="tx">         <span class="k">IF</span> (lock = '0') <span class="k">THEN</span><span class="c">--<span class="z">没有锁存时</span></span></span></div>
<div class="ln"><span class="no">39</span><span class="tx">            <span class="k">IF</span> (valid = '1') <span class="k">THEN</span></span></div>
</div>
<div id="hsb"></div>
<div id="hthumb"></div>
<svg style="left:349px;top:633px" width="100" height="8"><path d="M8.6 4.4 L4.6 8 L8.6 11.6 Z" fill="#404040"/><path d="M79.5 5 V9 M82.5 5 V9 M85.5 5 V9" stroke="#303030" stroke-width="1"/></svg>
</body></html>
